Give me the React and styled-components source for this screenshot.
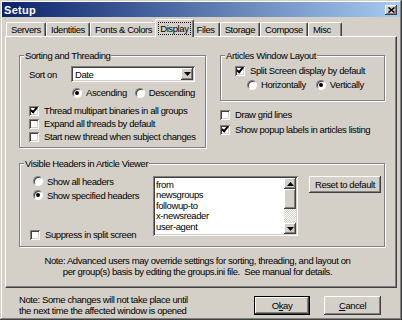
import React from "react";
import styled, { createGlobalStyle, css } from "styled-components";

const FONT = `"Liberation Sans", Arial, sans-serif`;

const GlobalStyle = createGlobalStyle`
  html, body {
    margin: 0;
    padding: 0;
    background: #d4d0c8;
  }
  body {
    font-family: ${FONT};
    font-size: 9.5px;
    letter-spacing: -0.4px;
    color: #000;
  }
`;

const raised = css`
  box-shadow: inset -1px -1px #404040, inset 1px 1px #fff, inset -2px -2px #808080;
`;

const sunken = css`
  box-shadow: inset 1px 1px #808080, inset -1px -1px #fff, inset 2px 2px #404040, inset -2px -2px #d4d0c8;
`;

const App = () => {
  return (
    <>
      <GlobalStyle />
      <Window>
        <TitleBar>
          <TitleText>Setup</TitleText>
          <CloseButton>
            <svg width="7" height="6" viewBox="0 0 7 6">
              <path d="M0.5 0.5 L6.5 5.5 M6.5 0.5 L0.5 5.5" stroke="#000" strokeWidth="1.5" />
            </svg>
          </CloseButton>
        </TitleBar>

        <TabRow>
          <Tab>Servers</Tab>
          <Tab>Identities</Tab>
          <Tab>Fonts &amp; Colors</Tab>
          <Tab $active>
            <Focus>Display</Focus>
          </Tab>
          <Tab>Files</Tab>
          <Tab>Storage</Tab>
          <Tab>Compose</Tab>
          <Tab $minWidth={34}>Misc</Tab>
        </TabRow>

        <Panel>
          <TopRow>
            <GroupBox $width={187} $height={93} $pad="10px 0 0 9px">
              <Legend>Sorting and Threading</Legend>
              <SortRow>
                <FieldLabel>Sort on</FieldLabel>
                <Combo>
                  <ComboText>Date</ComboText>
                  <ComboArrow>
                    <svg width="7" height="4" viewBox="0 0 7 4">
                      <path d="M0 0 H7 L3.5 4 Z" fill="#000" />
                    </svg>
                  </ComboArrow>
                </Combo>
              </SortRow>
              <OptionRow $indent={43} $top={5}>
                <Option $gap={8}>
                  <Radio $checked />
                  <span>Ascending</span>
                </Option>
                <Option>
                  <Radio />
                  <span>Descending</span>
                </Option>
              </OptionRow>
              <CheckList $top={6}>
                <Option>
                  <Check $checked />
                  <span>Thread multipart binaries in all groups</span>
                </Option>
                <Option>
                  <Check />
                  <span>Expand all threads by default</span>
                </Option>
                <Option>
                  <Check />
                  <span>Start new thread when subject changes</span>
                </Option>
              </CheckList>
            </GroupBox>

            <RightColumn>
              <GroupBox $width={165} $height={46} $pad="9px 0 0 14px">
                <Legend>Articles Window Layout</Legend>
                <Option>
                  <Check $checked />
                  <span>Split Screen display by default</span>
                </Option>
                <OptionRow $indent={12} $top={3}>
                  <Option $gap={10}>
                    <Radio />
                    <span>Horizontally</span>
                  </Option>
                  <Option>
                    <Radio $checked />
                    <span>Vertically</span>
                  </Option>
                </OptionRow>
              </GroupBox>
              <CheckList $top={6} $rowHeight={15}>
                <Option>
                  <Check />
                  <span>Draw grid lines</span>
                </Option>
                <Option>
                  <Check $checked />
                  <span>Show popup labels in articles listing</span>
                </Option>
              </CheckList>
            </RightColumn>
          </TopRow>

          <GroupBox $width={366} $height={84} $pad="12px 0 0 13px" $top={15}>
            <Legend>Visible Headers in Article Viewer</Legend>
            <HeadersRow>
              <HeadersLeft>
                <CheckList $rowHeight={14}>
                  <Option>
                    <Radio />
                    <span>Show all headers</span>
                  </Option>
                  <Option>
                    <Radio $checked />
                    <span>Show specified headers</span>
                  </Option>
                </CheckList>
                <SuppressRow>
                  <Check />
                  <span>Suppress in split screen</span>
                </SuppressRow>
              </HeadersLeft>
              <ListBox>
                <ListItems>
                  <div>from</div>
                  <div>newsgroups</div>
                  <div>followup-to</div>
                  <div>x-newsreader</div>
                  <div>user-agent</div>
                </ListItems>
                <ScrollBar>
                  <ScrollButton>
                    <svg width="7" height="4" viewBox="0 0 7 4">
                      <path d="M0 4 H7 L3.5 0 Z" fill="#000" />
                    </svg>
                  </ScrollButton>
                  <ScrollThumb />
                  <ScrollTrack />
                  <ScrollButton>
                    <svg width="7" height="4" viewBox="0 0 7 4">
                      <path d="M0 0 H7 L3.5 4 Z" fill="#000" />
                    </svg>
                  </ScrollButton>
                </ScrollBar>
              </ListBox>
              <PushButton $width={72} $height={17} $left={11}>
                Reset to default
              </PushButton>
            </HeadersRow>
          </GroupBox>

          <Note>
            Note: Advanced users may override settings for sorting, threading, and layout on
            <br />
            per group(s) basis by editing the groups.ini file.&nbsp; See manual for details.
          </Note>
        </Panel>

        <Footer>
          <FooterNote>
            Note: Some changes will not take place until
            <br />
            the next time the affected window is opened
          </FooterNote>
          <Buttons>
            <PushButton $width={56} $height={19} $default>
              O<u>k</u>ay
            </PushButton>
            <PushButton $width={57} $height={19}>
              <u>C</u>ancel
            </PushButton>
          </Buttons>
        </Footer>
      </Window>
    </>
  );
};

export default App;

const Window = styled.div`
  width: 402px;
  height: 320px;
  box-sizing: border-box;
  padding: 2px;
  display: flex;
  flex-direction: column;
  background: #d4d0c8;
  box-shadow: inset -1px -1px #404040, inset 1px 1px #d4d0c8, inset -2px -2px #808080, inset 2px 2px #fff;
`;

const TitleBar = styled.div`
  height: 15px;
  flex: none;
  display: flex;
  align-items: center;
  justify-content: space-between;
  padding: 0 3px 0 2px;
  background: linear-gradient(to right, #0a246a, #a6caf0);
`;

const TitleText = styled.div`
  font-family: "Liberation Sans", Arial, sans-serif;
  font-weight: bold;
  font-size: 11px;
  color: #fff;
  letter-spacing: 0.3px;
`;

const CloseButton = styled.div`
  width: 12px;
  height: 10px;
  display: flex;
  align-items: center;
  justify-content: center;
  background: #d4d0c8;
  ${raised};
`;

const TabRow = styled.div`
  height: 17px;
  margin-top: 2px;
  padding-left: 4px;
  display: flex;
  align-items: flex-end;
  flex: none;
  position: relative;
  z-index: 1;
`;

const Tab = styled.div`
  box-sizing: border-box;
  height: ${(p) => (p.$active ? 18 : 14)}px;
  margin: ${(p) => (p.$active ? "0 -2px -1px" : "0")};
  min-width: ${(p) => p.$minWidth || 0}px;
  padding: 0 ${(p) => (p.$active ? 3 : 4)}px 0 ${(p) => (p.$active ? 3 : 4)}px;
  display: flex;
  align-items: center;
  line-height: 10px;
  background: #d4d0c8;
  border-radius: 2px 2px 0 0;
  border-top: 1px solid #fff;
  border-left: 1px solid #fff;
  border-right: 1px solid #404040;
  box-shadow: inset -1px 0 #808080;
  white-space: nowrap;
  position: relative;
  z-index: ${(p) => (p.$active ? 2 : 0)};
`;

const Focus = styled.span`
  outline: 1px dotted #000;
  outline-offset: 0;
  padding: 1px 1px 0;
`;

const Panel = styled.div`
  box-sizing: border-box;
  height: 252px;
  margin: 0 3px 0 3px;
  flex: none;
  padding: 18px 0 0 13px;
  border-top: 1px solid #fff;
  border-left: 1px solid #fff;
  border-right: 1px solid #404040;
  border-bottom: 1px solid #404040;
  box-shadow: inset -1px -1px #808080;
`;

const TopRow = styled.div`
  display: flex;
  gap: 14px;
  align-items: flex-start;
`;

const RightColumn = styled.div`
  display: flex;
  flex-direction: column;
`;

const GroupBox = styled.div`
  box-sizing: border-box;
  position: relative;
  width: ${(p) => p.$width}px;
  height: ${(p) => p.$height}px;
  margin-top: ${(p) => p.$top || 0}px;
  padding: ${(p) => p.$pad};
  border: 1px solid #808080;
  box-shadow: inset 1px 1px #fff, 1px 1px #fff;
`;

const Legend = styled.span`
  position: absolute;
  top: -6px;
  left: 4px;
  padding: 0 1px;
  line-height: 11px;
  background: #d4d0c8;
`;

const SortRow = styled.div`
  display: flex;
  align-items: center;
  height: 16px;
`;

const FieldLabel = styled.div`
  width: 42px;
`;

const Combo = styled.div`
  box-sizing: border-box;
  width: 124px;
  height: 16px;
  display: flex;
  align-items: center;
  justify-content: space-between;
  padding: 2px;
  background: #fff;
  ${sunken};
`;

const ComboText = styled.span`
  padding-left: 2px;
`;

const ComboArrow = styled.div`
  width: 12px;
  height: 12px;
  display: flex;
  align-items: center;
  justify-content: center;
  background: #d4d0c8;
  ${raised};
`;

const OptionRow = styled.div`
  display: flex;
  height: 11px;
  margin-top: ${(p) => p.$top || 0}px;
  padding-left: ${(p) => p.$indent || 0}px;
`;

const Option = styled.div`
  display: flex;
  align-items: center;
  gap: 4px;
  margin-right: ${(p) => p.$gap || 0}px;
  white-space: nowrap;
`;

const CheckList = styled.div`
  display: grid;
  grid-auto-rows: ${(p) => p.$rowHeight || 13}px;
  margin-top: ${(p) => p.$top || 0}px;
`;

const Radio = styled.span`
  box-sizing: border-box;
  width: 10px;
  height: 10px;
  flex: none;
  border-radius: 50%;
  background: #fff;
  border: 1px solid;
  border-color: #808080 #fff #fff #808080;
  box-shadow: inset 1px 1px #404040;
  display: flex;
  align-items: center;
  justify-content: center;
  &::after {
    content: "";
    width: 4px;
    height: 4px;
    border-radius: 50%;
    background: ${(p) => (p.$checked ? "#000" : "transparent")};
  }
`;

const Check = styled.span`
  box-sizing: border-box;
  width: 10px;
  height: 10px;
  flex: none;
  margin-right: 1px;
  background: #fff;
  ${sunken};
  display: flex;
  align-items: center;
  justify-content: center;
  &::after {
    content: "";
    display: ${(p) => (p.$checked ? "block" : "none")};
    width: 2px;
    height: 5px;
    margin-top: -2px;
    border: solid #000;
    border-width: 0 2px 2px 0;
    transform: rotate(40deg);
  }
`;

const HeadersRow = styled.div`
  display: flex;
  align-items: flex-start;
`;

const HeadersLeft = styled.div`
  width: 120px;
  height: 67px;
  margin-top: -2px;
  display: flex;
  flex-direction: column;
  justify-content: space-between;
`;

const SuppressRow = styled.div`
  display: flex;
  align-items: center;
  gap: 4px;
  height: 13px;
  margin-left: -3px;
`;

const ListBox = styled.div`
  box-sizing: border-box;
  width: 145px;
  height: 60px;
  display: flex;
  padding: 2px;
  background: #fff;
  ${sunken};
`;

const ListItems = styled.div`
  flex: 1;
  padding: 2px 0 0 1px;
  line-height: 10.4px;
`;

const ScrollBar = styled.div`
  width: 12px;
  display: flex;
  flex-direction: column;
`;

const ScrollButton = styled.div`
  height: 11px;
  flex: none;
  display: flex;
  align-items: center;
  justify-content: center;
  background: #d4d0c8;
  ${raised};
`;

const ScrollThumb = styled.div`
  height: 20px;
  flex: none;
  background: #d4d0c8;
  ${raised};
`;

const ScrollTrack = styled.div`
  flex: 1;
  background-color: #d4d0c8;
  background-image: repeating-conic-gradient(#fff 0 25%, #d4d0c8 0 50%);
  background-size: 2px 2px;
`;

const PushButton = styled.div`
  box-sizing: border-box;
  width: ${(p) => p.$width}px;
  height: ${(p) => p.$height}px;
  margin-left: ${(p) => p.$left || 0}px;
  display: flex;
  align-items: center;
  justify-content: center;
  background: #d4d0c8;
  white-space: nowrap;
  ${(p) =>
    p.$default
      ? css`
          border: 1px solid #000;
          box-shadow: inset -1px -1px #404040, inset 1px 1px #fff, inset -2px -2px #808080;
        `
      : raised};
`;

const Note = styled.div`
  margin-top: 9px;
  padding-right: 20px;
  text-align: center;
  line-height: 10.5px;
`;

const Footer = styled.div`
  flex: 1;
  display: flex;
  align-items: flex-start;
  padding: 6px 19px 0 17px;
`;

const FooterNote = styled.div`
  line-height: 11px;
`;

const Buttons = styled.div`
  margin-left: auto;
  margin-top: 2px;
  display: flex;
  gap: 14px;
`;
